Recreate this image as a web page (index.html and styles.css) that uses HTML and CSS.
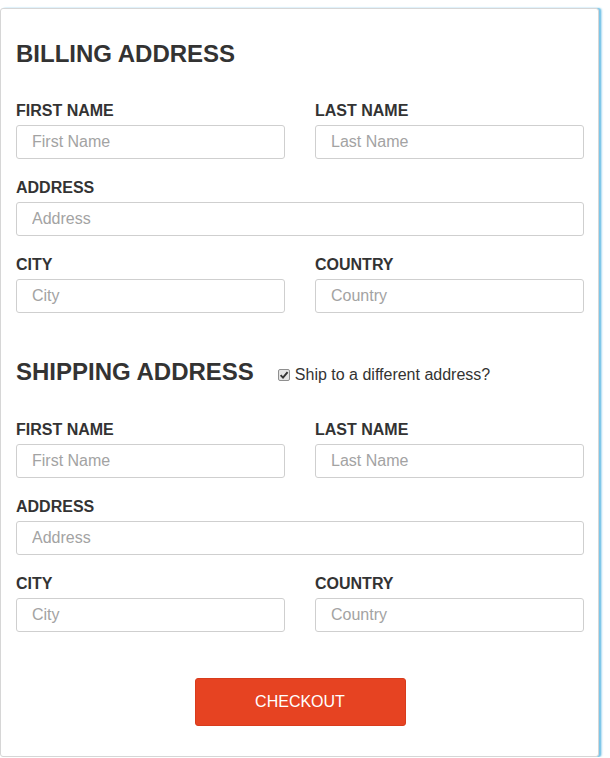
FILE: index.html
```html
<!DOCTYPE html>
<html>
<head>
<meta charset="utf-8">
<link rel="stylesheet" href="styles.css">
</head>
<body>
<form class="card">
  <h2 class="section-title">BILLING ADDRESS</h2>
  <div class="fields">
    <div class="field"><label>FIRST NAME</label><input type="text" placeholder="First Name"></div>
    <div class="field"><label>LAST NAME</label><input type="text" placeholder="Last Name"></div>
    <div class="field full"><label>ADDRESS</label><input type="text" placeholder="Address"></div>
    <div class="field"><label>CITY</label><input type="text" placeholder="City"></div>
    <div class="field"><label>COUNTRY</label><input type="text" placeholder="Country"></div>
  </div>

  <div class="section-head">
    <h2 class="section-title">SHIPPING ADDRESS</h2>
    <label class="check"><input type="checkbox" checked><span>Ship to a different address?</span></label>
  </div>
  <div class="fields">
    <div class="field"><label>FIRST NAME</label><input type="text" placeholder="First Name"></div>
    <div class="field"><label>LAST NAME</label><input type="text" placeholder="Last Name"></div>
    <div class="field full"><label>ADDRESS</label><input type="text" placeholder="Address"></div>
    <div class="field"><label>CITY</label><input type="text" placeholder="City"></div>
    <div class="field"><label>COUNTRY</label><input type="text" placeholder="Country"></div>
  </div>

  <div class="actions">
    <button type="button" class="checkout">CHECKOUT</button>
  </div>
</form>
</body>
</html>
```

FILE: styles.css
```css
html, body {
  margin: 0;
  padding: 0;
  background: #fff;
}
body {
  padding-top: 8px;
  font-family: "Liberation Sans", Arial, sans-serif;
  color: #333;
}
.card {
  box-sizing: border-box;
  width: 599px;
  border: 1px solid #d6d6d6;
  border-radius: 3px;
  padding: 32px 14px 30px 15px;
  box-shadow: 2px 0 1px #7cc6e8, 3px 0 2px #b5def2;
  background: #fff;
}
.section-title {
  margin: 0;
  font-size: 24px;
  line-height: 26px;
  font-weight: bold;
  color: #333;
}
.card > .section-title {
  margin-bottom: 32px;
}
.section-head {
  display: flex;
  align-items: baseline;
  margin-top: 46px;
  margin-bottom: 33px;
}
.check {
  display: flex;
  align-items: baseline;
  margin-left: 24px;
  font-size: 16px;
  color: #333;
}
.check input {
  -webkit-appearance: none;
  appearance: none;
  box-sizing: border-box;
  width: 12px;
  height: 12px;
  margin: 0 5px 0 0;
  position: relative;
  top: 1px;
  border: 1px solid #8f8f8f;
  border-radius: 2px;
  background-color: #e4e4e4;
  background-image: url("data:image/svg+xml,%3Csvg xmlns='http://www.w3.org/2000/svg' viewBox='0 0 10 10'%3E%3Cpath d='M1.6 5.2 L4 7.6 L8.6 2.2' fill='none' stroke='%23333' stroke-width='1.9'/%3E%3C/svg%3E");
  background-size: 10px 10px;
  background-position: center;
  background-repeat: no-repeat;
}
.fields {
  display: grid;
  grid-template-columns: 269px 269px;
  column-gap: 30px;
  row-gap: 17px;
}
.field {
  display: flex;
  flex-direction: column;
}
.field.full {
  grid-column: 1 / 3;
}
.field label {
  font-size: 16px;
  line-height: 20px;
  font-weight: bold;
  color: #333;
  padding-top: 2px;
  margin-bottom: 4px;
}
.field input {
  box-sizing: border-box;
  height: 34px;
  width: 100%;
  border: 1px solid #cfcfcf;
  border-radius: 3px;
  padding: 0 15px;
  font-family: "Liberation Sans", Arial, sans-serif;
  font-size: 16px;
  color: #333;
  outline: none;
  margin: 0;
}
.field input::placeholder {
  color: #a3a3a3;
}
.actions {
  display: flex;
  justify-content: center;
  margin-top: 46px;
}
.checkout {
  width: 211px;
  height: 48px;
  background: #e64322;
  border: 1px solid #d83c1c;
  border-radius: 3px;
  color: #fff;
  font-family: "Liberation Sans", Arial, sans-serif;
  font-size: 16px;
  padding: 0;
}
```
